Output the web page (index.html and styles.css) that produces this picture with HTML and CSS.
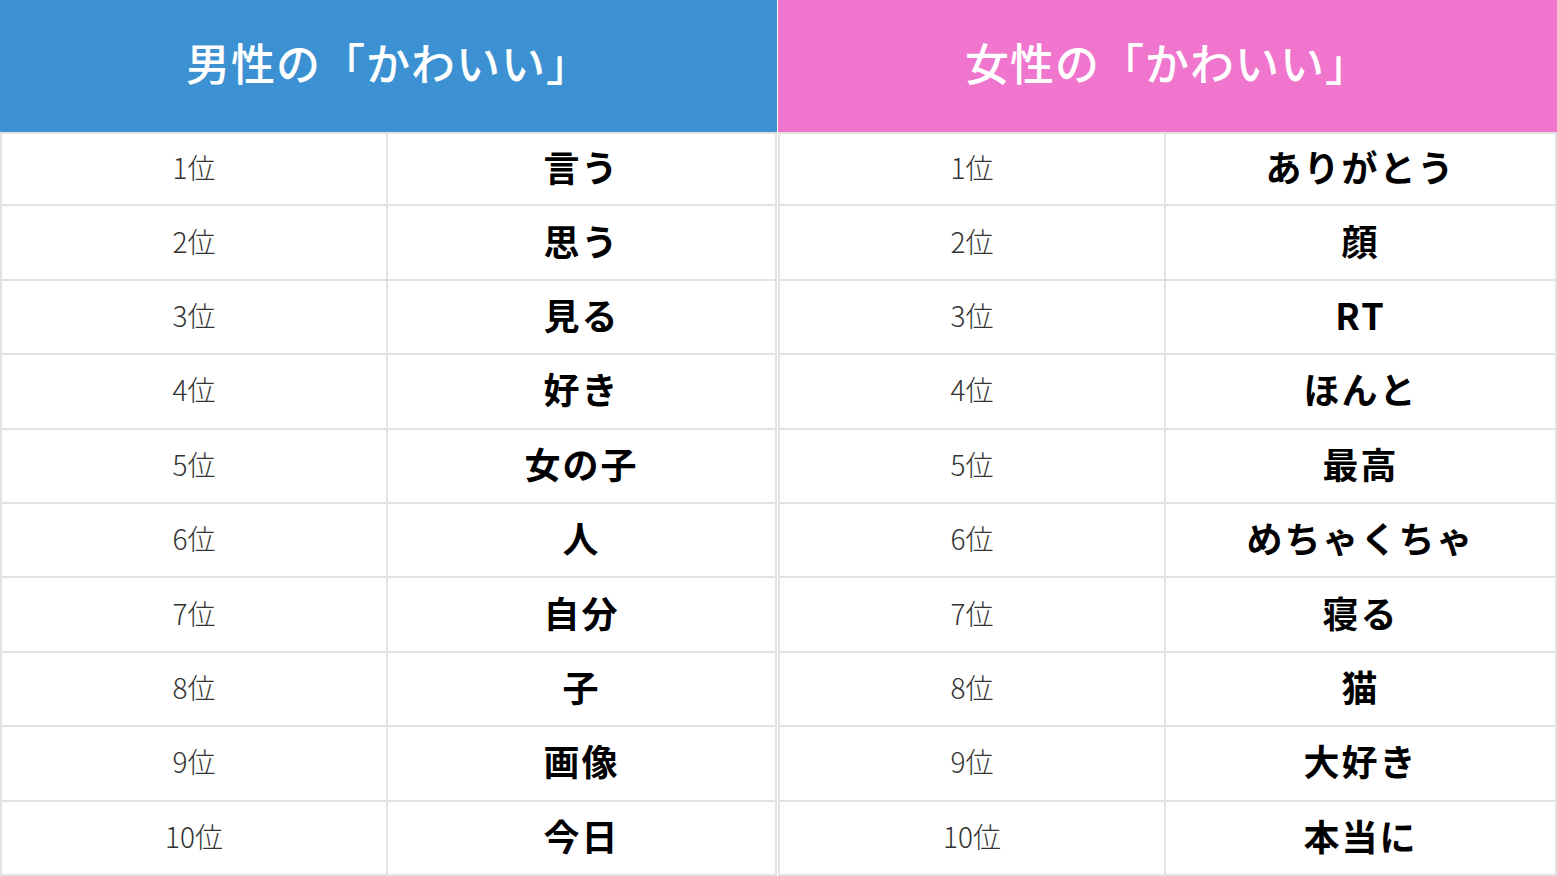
FILE: index.html
```html
<!DOCTYPE html>
<html lang="ja">
<head>
<meta charset="utf-8">
<title>かわいい ランキング</title>
<link rel="stylesheet" href="styles.css">
</head>
<body>
<div class="page">
  <section class="board board-male">
    <div class="head">男性の「かわいい」</div>
    <div class="rank">1位</div><div class="word">言う</div>
    <div class="rank">2位</div><div class="word">思う</div>
    <div class="rank">3位</div><div class="word">見る</div>
    <div class="rank">4位</div><div class="word">好き</div>
    <div class="rank">5位</div><div class="word">女の子</div>
    <div class="rank">6位</div><div class="word">人</div>
    <div class="rank">7位</div><div class="word">自分</div>
    <div class="rank">8位</div><div class="word">子</div>
    <div class="rank">9位</div><div class="word">画像</div>
    <div class="rank">10位</div><div class="word">今日</div>
  </section>
  <section class="board board-female">
    <div class="head">女性の「かわいい」</div>
    <div class="rank">1位</div><div class="word">ありがとう</div>
    <div class="rank">2位</div><div class="word">顔</div>
    <div class="rank">3位</div><div class="word">RT</div>
    <div class="rank">4位</div><div class="word">ほんと</div>
    <div class="rank">5位</div><div class="word">最高</div>
    <div class="rank">6位</div><div class="word">めちゃくちゃ</div>
    <div class="rank">7位</div><div class="word">寝る</div>
    <div class="rank">8位</div><div class="word">猫</div>
    <div class="rank">9位</div><div class="word">大好き</div>
    <div class="rank">10位</div><div class="word">本当に</div>
  </section>
</div>
</body>
</html>
```
FILE: styles.css
```css
html, body {
  margin: 0;
  padding: 0;
  background: #ffffff;
}
body {
  font-family: "Noto Sans CJK JP", "Noto Sans", sans-serif;
  color: #222;
}
.page {
  display: flex;
  gap: 1px;
  width: 1557px;
  height: 876px;
  overflow: hidden;
}
.board {
  display: grid;
  grid-template-columns: 388px 1fr;
  grid-template-rows: 132px repeat(10, 1fr);
  height: 876px;
}
.board-male {
  width: 777px;
}
.board-female {
  width: 779px;
}
.head {
  grid-column: 1 / span 2;
  display: flex;
  align-items: center;
  justify-content: center;
  color: #ffffff;
  font-size: 44px;
  font-weight: 500;
  letter-spacing: 1px;
  padding-bottom: 8px;
}
.board-male .head {
  background: #3b91d2;
}
.board-female .head {
  background: #f075cc;
}
.rank, .word {
  display: flex;
  align-items: center;
  justify-content: center;
  border-bottom: 2px solid #e2e2e2;
  border-right: 2px solid #e2e2e2;
}
.rank {
  border-left: 2px solid #e2e2e2;
  font-size: 28px;
  font-weight: 300;
  color: #333;
  padding-bottom: 4px;
}
.word {
  font-size: 36px;
  font-weight: 700;
  color: #000;
  letter-spacing: 2px;
  padding-bottom: 6px;
}
.board > .rank:nth-child(2),
.board > .word:nth-child(3) {
  border-top: 2px solid #e2e2e2;
}
```
